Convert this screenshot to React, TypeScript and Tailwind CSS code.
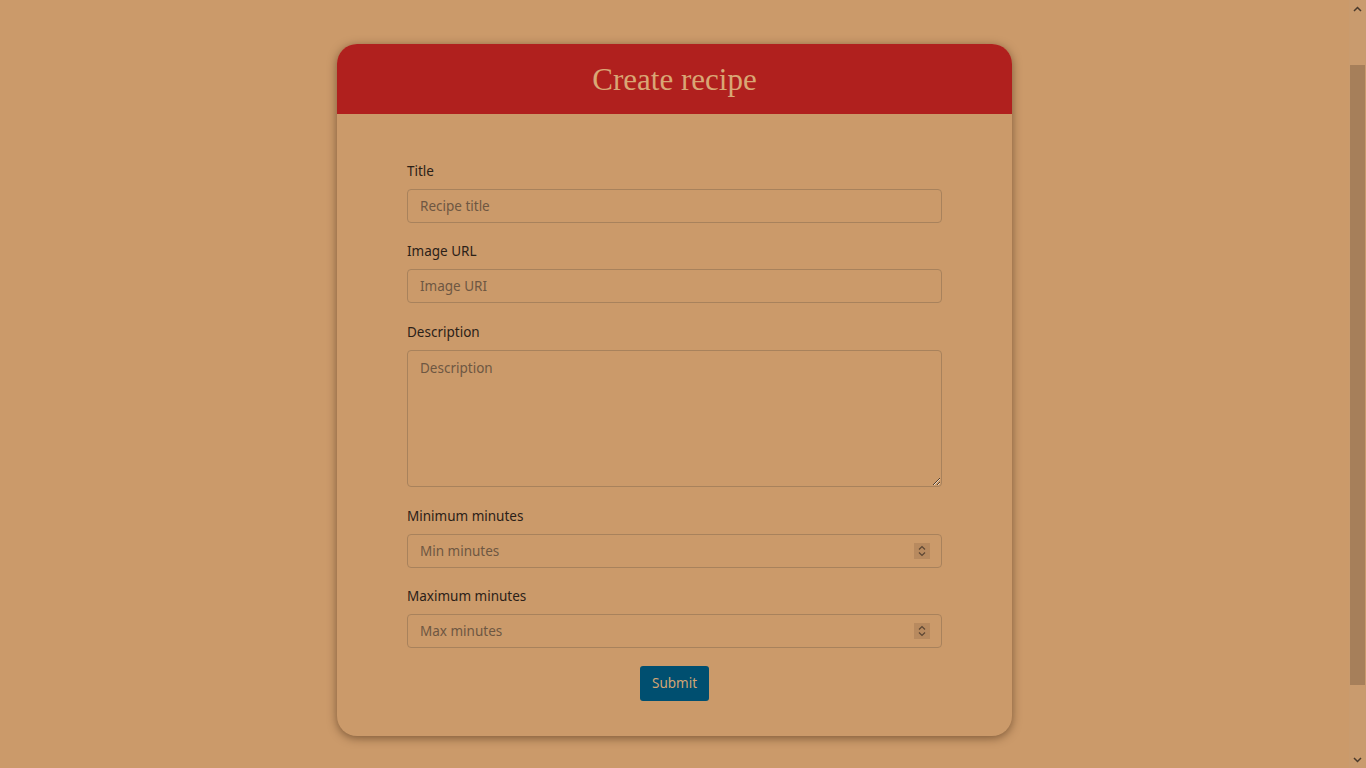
import React from 'react';

const fields = [
  { id: 'title', label: 'Title', placeholder: 'Recipe title' },
  { id: 'image', label: 'Image URL', placeholder: 'Image URI' },
];

const numberFields = [
  { id: 'min', label: 'Minimum minutes', placeholder: 'Min minutes' },
  { id: 'max', label: 'Maximum minutes', placeholder: 'Max minutes' },
];

const labelClass = 'block text-[13.5px] leading-[21px] text-[#2b2118] mb-[7px]';

const inputClass =
  'block w-full h-[34px] px-3 rounded-[4px] border border-[#a8825c] bg-transparent text-[13.5px] text-[#2b2118] placeholder:text-[#6e5742] outline-none';

const Spinner = () => (
  <span className="absolute right-[12px] top-1/2 -translate-y-1/2 w-[16px] h-[16px] bg-[#b88a5f] flex items-center justify-center pointer-events-none">
    <svg width="8" height="12" viewBox="0 0 8 12" fill="none" stroke="#5c4633" strokeWidth="1.2">
      <path d="M1 4.5 L4 1.5 L7 4.5" />
      <path d="M1 7.5 L4 10.5 L7 7.5" />
    </svg>
  </span>
);

// looks like the browser scrollbar in the shot
const ScrollBar = () => (
  <div className="w-[17px] h-screen shrink-0 bg-[#c99b6e] flex flex-col items-center">
    <div className="h-[17px] flex items-center justify-center">
      <svg width="9" height="6" viewBox="0 0 9 6" fill="none" stroke="#4a3a2c" strokeWidth="1.5">
        <path d="M1 5 L4.5 1.5 L8 5" />
      </svg>
    </div>
    <div className="mt-[48px] w-[15px] h-[620px] bg-[#a67f5a]" />
    <div className="flex-1" />
    <div className="h-[17px] flex items-center justify-center">
      <svg width="9" height="6" viewBox="0 0 9 6" fill="none" stroke="#4a3a2c" strokeWidth="1.5">
        <path d="M1 1 L4.5 4.5 L8 1" />
      </svg>
    </div>
  </div>
);

const App = () => {
  return (
    <div
      className="h-screen flex bg-[#cb9a6a] overflow-hidden"
      style={{ fontFamily: '"Noto Sans", "Open Sans", sans-serif' }}
    >
      <div className="flex-1 pt-[44px] flex justify-center">
        <div className="w-[675px] h-fit rounded-[20px] overflow-hidden bg-[#cb9a6a] shadow-[0_2px_10px_rgba(60,35,15,0.55)]">
          {/* Header */}
          <div className="h-[70px] bg-[#b0201e] flex items-center justify-center">
            <h1
              className="text-[31px] text-[#d9a775] leading-none"
              style={{ fontFamily: '"Liberation Serif", Georgia, serif' }}
            >
              Create recipe
            </h1>
          </div>

          {/* Form */}
          <form className="px-[70px] pt-[47px] pb-[35px] flex flex-col" onSubmit={(e) => e.preventDefault()}>
            {fields.map((f) => (
              <div key={f.id} className="mb-[18px]">
                <label htmlFor={f.id} className={labelClass}>
                  {f.label}
                </label>
                <input id={f.id} type="text" placeholder={f.placeholder} className={inputClass} />
              </div>
            ))}

            <div className="mt-[1px] mb-[19px]">
              <label htmlFor="description" className={labelClass}>
                Description
              </label>
              <textarea
                id="description"
                placeholder="Description"
                className="block w-full h-[137px] px-3 py-[7px] rounded-[4px] border border-[#a8825c] bg-transparent text-[13.5px] text-[#2b2118] placeholder:text-[#6e5742] outline-none"
              />
            </div>

            {numberFields.map((f) => (
              <div key={f.id} className="mb-[18px]">
                <label htmlFor={f.id} className={labelClass}>
                  {f.label}
                </label>
                <div className="relative">
                  <input id={f.id} type="text" inputMode="numeric" placeholder={f.placeholder} className={inputClass} />
                  <Spinner />
                </div>
              </div>
            ))}

            <div className="flex justify-center">
              <button
                type="submit"
                className="h-[35px] px-[12px] rounded-[3px] bg-[#004f70] text-[13.5px] text-[#d2a574]"
              >
                Submit
              </button>
            </div>
          </form>
        </div>
      </div>
      <ScrollBar />
    </div>
  );
};

export default App;
